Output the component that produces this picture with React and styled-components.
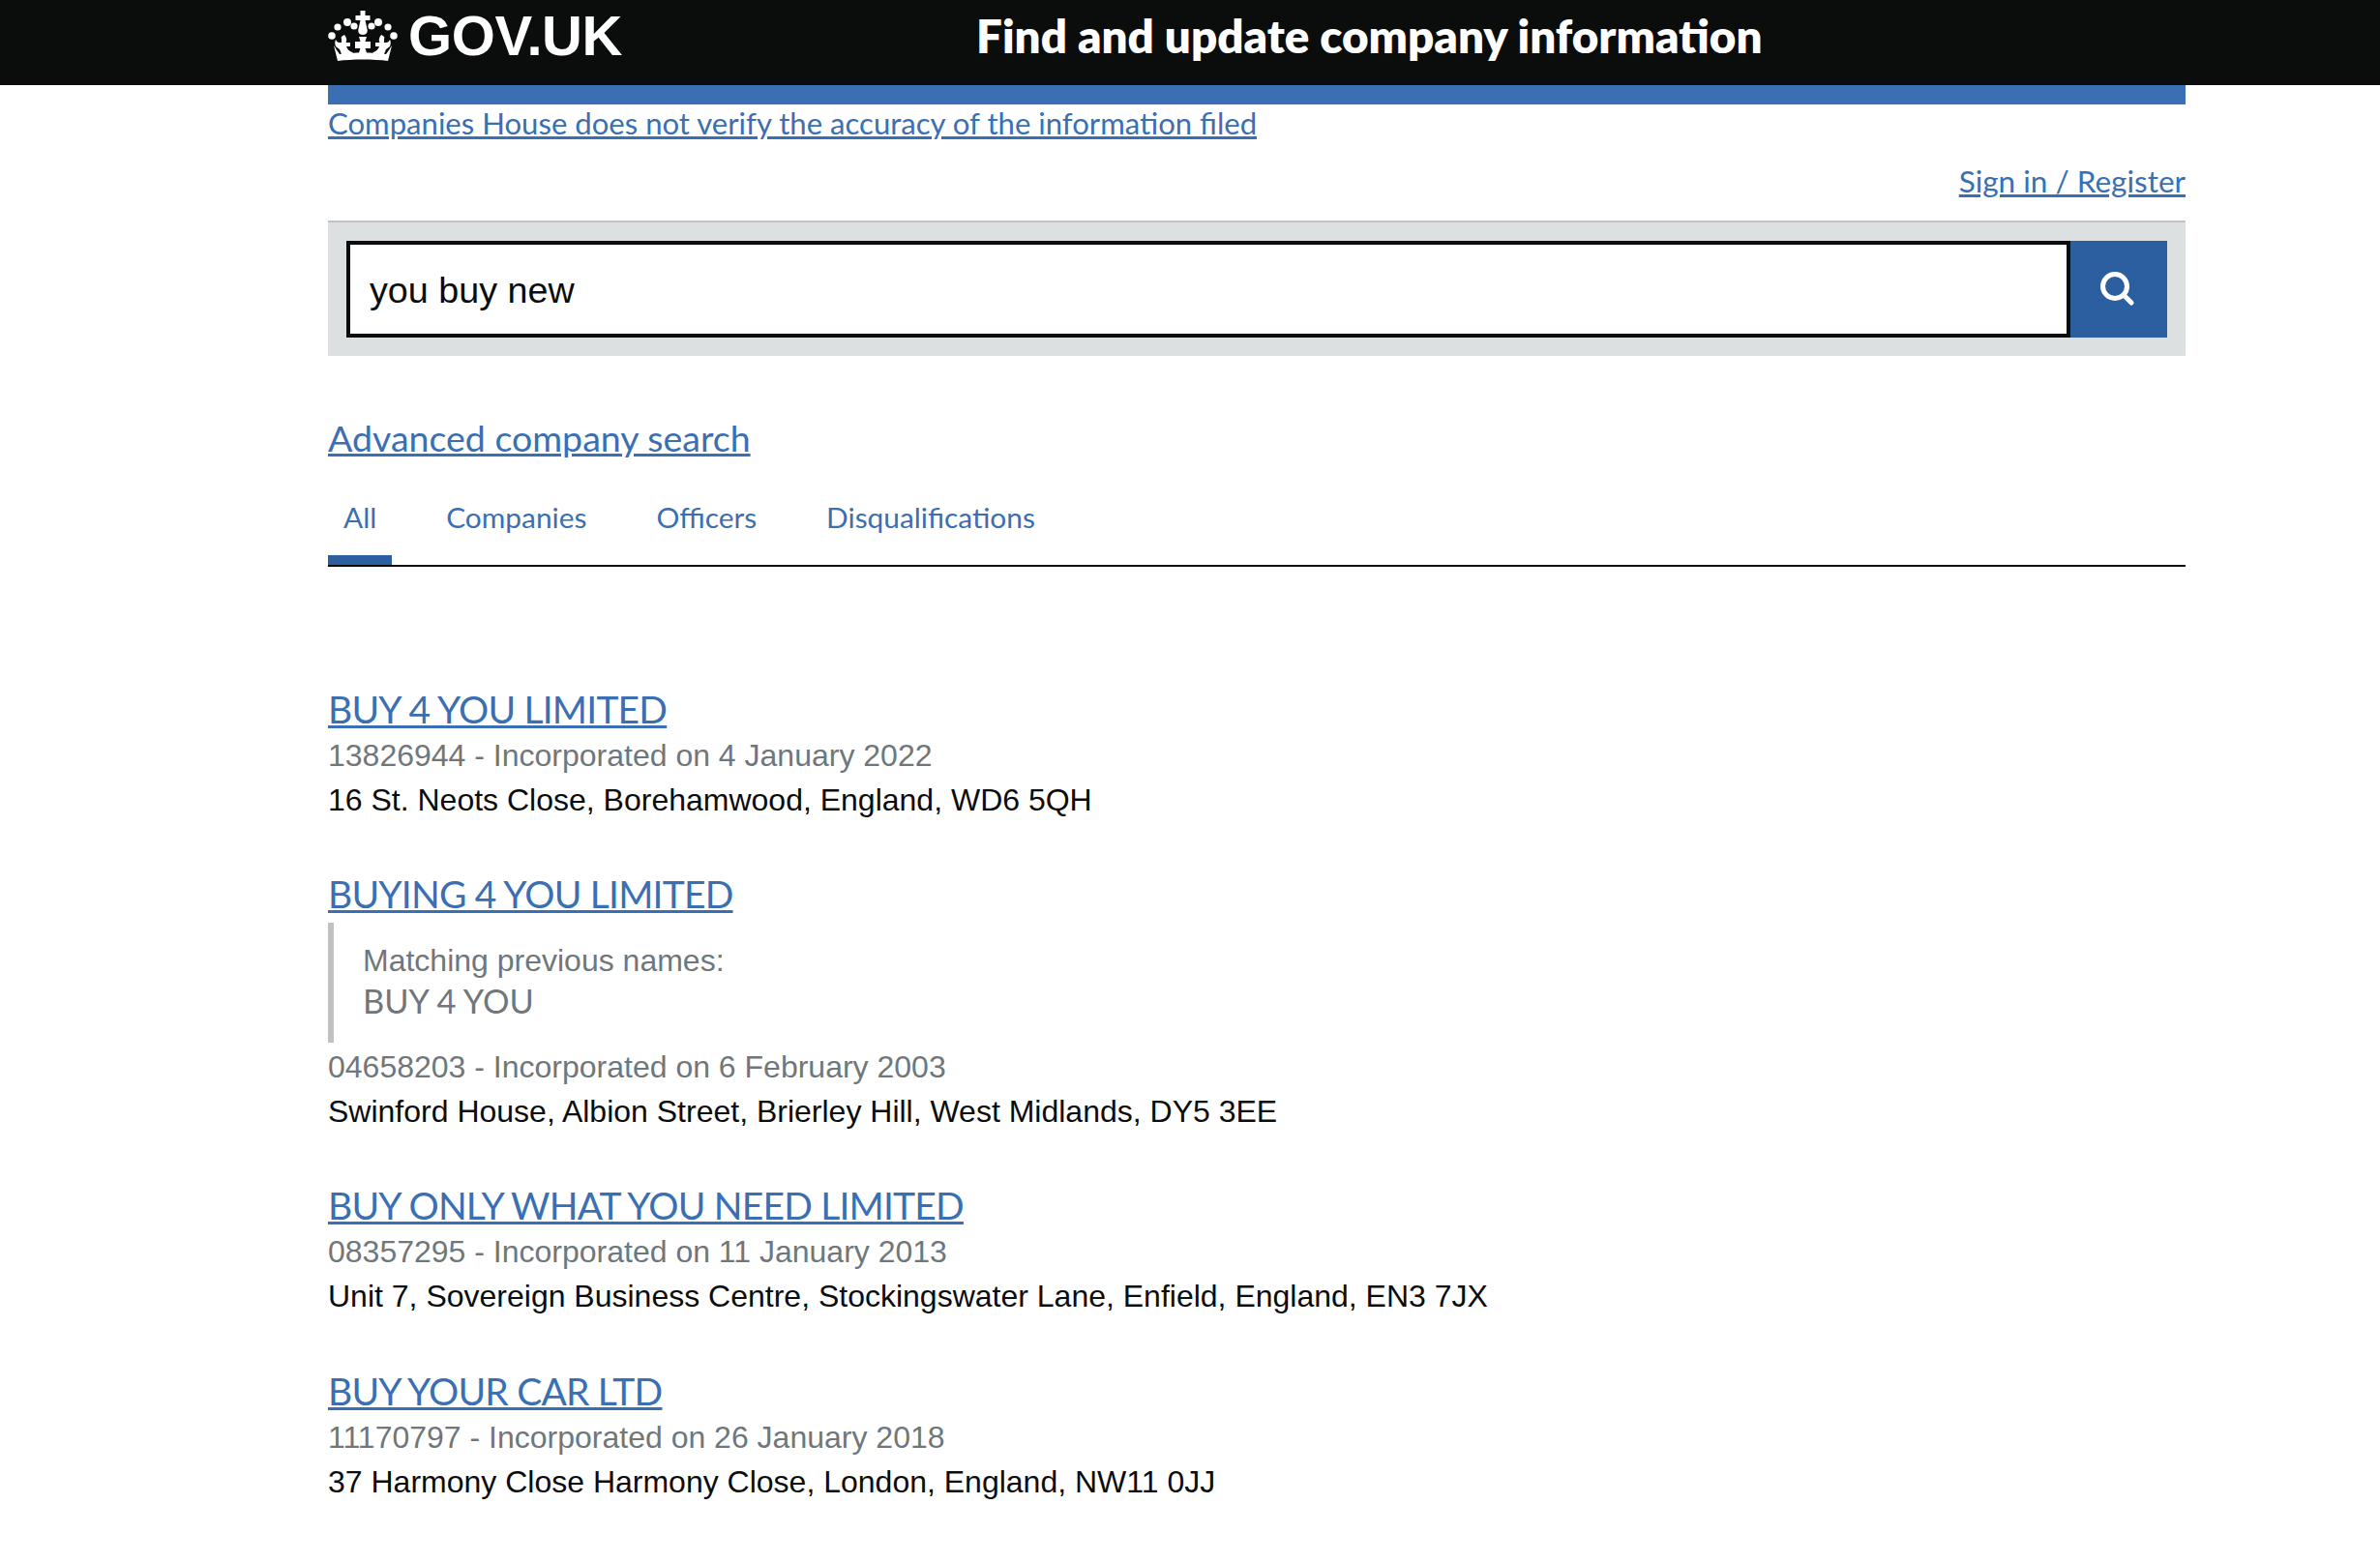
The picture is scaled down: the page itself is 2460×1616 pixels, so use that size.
import React from "react";
import styled, { createGlobalStyle } from "styled-components";

const results = [
  {
    title: "BUY 4 YOU LIMITED",
    meta: "13826944 - Incorporated on 4 January 2022",
    address: "16 St. Neots Close, Borehamwood, England, WD6 5QH",
  },
  {
    title: "BUYING 4 YOU LIMITED",
    previous: "BUY 4 YOU",
    meta: "04658203 - Incorporated on 6 February 2003",
    address: "Swinford House, Albion Street, Brierley Hill, West Midlands, DY5 3EE",
  },
  {
    title: "BUY ONLY WHAT YOU NEED LIMITED",
    meta: "08357295 - Incorporated on 11 January 2013",
    address: "Unit 7, Sovereign Business Centre, Stockingswater Lane, Enfield, England, EN3 7JX",
  },
  {
    title: "BUY YOUR CAR LTD",
    meta: "11170797 - Incorporated on 26 January 2018",
    address: "37 Harmony Close Harmony Close, London, England, NW11 0JJ",
  },
  {
    title: "BUY BOX SOLUTIONS LTD",
  },
];

const tabs = ["All", "Companies", "Officers", "Disqualifications"];

const Crown = () => (
  <svg width="72" height="54" viewBox="0 0 72 54" fill="#fff">
    <path d="M33.5 1h5v5h5v5h-5l2 9c1 3-1 6-4.500 6s-5.500-3-4.500-6l2-9h-5V6h5z" />
    <circle cx="20" cy="13" r="4" />
    <circle cx="52" cy="13" r="4" />
    <circle cx="10" cy="18" r="3.600" />
    <circle cx="62" cy="18" r="3.600" />
    <circle cx="27" cy="17" r="3.600" />
    <circle cx="45" cy="17" r="3.600" />
    <circle cx="4" cy="27" r="3.800" />
    <circle cx="68" cy="27" r="3.800" />
    <path d="M32 28h8l-1.500 5H44v7h-5.500l2 6h-9l2-6H28v-7h5.500z" />
    <path d="M17 26c2 3 3 5 1.500 8H23v4h-4c1 3 3 5 6 6l2 2H14l-2-5-4-3c-1-3-1-5 0-7 1 2 2 3 4 3h2v-4c-1-1 0-3 3-4z" />
    <path d="M55 26c-2 3-3 5-1.500 8H49v4h4c-1 3-3 5-6 6l-2 2h13l2-5 4-3c1-3 1-5 0-7-1 2-2 3-4 3h-2v-4c1-1 0-3-3-4z" />
    <path d="M6 37c2 3 3 5 6 9 15-2 33-2 48 0 3-4 4-6 6-9l-4 16c-14-2-38-2-52 0z" />
  </svg>
);

const SearchIcon = () => (
  <svg width="36" height="36" viewBox="0 0 36 36" fill="none" stroke="#fff">
    <circle cx="15" cy="15" r="12.500" strokeWidth="5" />
    <path d="M25 25l7 7" strokeWidth="5" strokeLinecap="round" />
  </svg>
);

export default function App() {
  return (
    <>
      <GlobalStyle />
      <Header>
        <Logo>
          <Crown />
          <LogoText>GOV.UK</LogoText>
        </Logo>
        <ServiceName>Find and update company information</ServiceName>
      </Header>
      <Page>
        <PhaseBar />
        <Notice href="#">Companies House does not verify the accuracy of the information filed</Notice>
        <SignInRow>
          <SignIn href="#">Sign in / Register</SignIn>
        </SignInRow>
        <SearchPanel>
          <SearchInput defaultValue="you buy new" />
          <SearchButton aria-label="Search">
            <SearchIcon />
          </SearchButton>
        </SearchPanel>
        <AdvancedLink href="#">Advanced company search</AdvancedLink>
        <Tabs>
          {tabs.map((tab, i) => (
            <Tab key={tab} $active={i === 0}>
              {tab}
            </Tab>
          ))}
        </Tabs>
        <Results>
          {results.map((r) => (
            <Result key={r.title}>
              <ResultTitle href="#">{r.title}</ResultTitle>
              {r.previous && (
                <Previous>
                  <PreviousLabel>Matching previous names:</PreviousLabel>
                  <PreviousName>{r.previous}</PreviousName>
                </Previous>
              )}
              {r.meta && <Meta>{r.meta}</Meta>}
              {r.address && <Address>{r.address}</Address>}
            </Result>
          ))}
        </Results>
      </Page>
    </>
  );
}

const GlobalStyle = createGlobalStyle`
  html, body {
    margin: 0;
    height: 1616px;
    overflow: hidden;
    background: #fff;
  }
`;

const Header = styled.header`
  display: flex;
  align-items: center;
  height: 88px;
  padding-left: 339px;
  background: #0b0c0c;
  color: #fff;
`;

const Logo = styled.div`
  display: flex;
  align-items: center;
  gap: 11px;
  width: 670px;
  margin-top: -14px;
`;

const LogoText = styled.span`
  font-family: "Liberation Sans", Arial, sans-serif;
  font-weight: 700;
  font-size: 58px;
  line-height: 58px;
  letter-spacing: -0.4px;
`;

const ServiceName = styled.div`
  font-family: Lato, sans-serif;
  font-weight: 800;
  font-size: 47.500px;
  line-height: 52px;
  margin-top: -14px;
`;

const Page = styled.main`
  display: flex;
  flex-direction: column;
  width: 1920px;
  margin-left: 339px;
  font-family: Lato, sans-serif;
`;

const PhaseBar = styled.div`
  height: 20px;
  background: #3a6fb3;
`;

const Notice = styled.a`
  align-self: flex-start;
  font-size: 31.100px;
  line-height: 38px;
  color: #3a6fb3;
  text-decoration: underline;
`;

const SignInRow = styled.div`
  display: flex;
  justify-content: flex-end;
  margin-top: 22px;
`;

const SignIn = styled(Notice)`
  font-size: 31.500px;
`;

const SearchPanel = styled.form`
  display: flex;
  margin-top: 22px;
  padding: 19px;
  background: #dde0e1;
  border-top: 2px solid #bfc1c3;
`;

const SearchInput = styled.input`
  flex: 1;
  box-sizing: border-box;
  height: 100px;
  padding: 2px 20px 0;
  border: 4px solid #0b0c0c;
  outline: none;
  font-family: "Liberation Sans", Arial, sans-serif;
  font-size: 37.700px;
  color: #0b0c0c;
`;

const SearchButton = styled.button`
  display: flex;
  align-items: center;
  justify-content: center;
  width: 100px;
  height: 100px;
  padding: 0 2px 0 0;
  border: none;
  background: #2b5f9f;
`;

const AdvancedLink = styled.a`
  align-self: flex-start;
  margin-top: 62px;
  font-size: 37.500px;
  line-height: 46px;
  color: #3a6fb3;
  text-decoration: underline;
`;

const Tabs = styled.nav`
  display: flex;
  gap: 40px;
  margin-top: 40px;
  border-bottom: 2px solid #0b0c0c;
`;

const Tab = styled.span`
  margin-top: -1px;
  padding: 0 16px 19px;
  font-size: 29.850px;
  line-height: 40px;
  color: #3a6fb3;
  border-bottom: 10px solid ${(p) => (p.$active ? "#2b5f9f" : "transparent")};
`;

const Results = styled.section`
  display: flex;
  flex-direction: column;
  gap: 50.2px;
  margin-top: 123px;
`;

const Result = styled.article`
  display: flex;
  flex-direction: column;
  align-items: flex-start;
`;

const ResultTitle = styled.a`
  font-size: 39px;
  line-height: 49px;
  letter-spacing: -0.8px;
  color: #3a6fb3;
  text-decoration: underline;
`;

const Previous = styled.div`
  align-self: stretch;
  box-sizing: border-box;
  height: 124px;
  margin: 5px 0 2px;
  padding: 20px 0 0 30px;
  border-left: 6px solid #bfc1c3;
  color: #6f777b;
`;

const PreviousLabel = styled.div`
  font-family: "Liberation Sans", Arial, sans-serif;
  font-size: 32px;
  line-height: 38px;
`;

const PreviousName = styled.div`
  font-size: 34.400px;
  line-height: 46px;
`;

const Meta = styled.div`
  font-family: "Liberation Sans", Arial, sans-serif;
  font-size: 32px;
  line-height: 46px;
  color: #6f777b;
`;

const Address = styled.div`
  font-family: "Liberation Sans", Arial, sans-serif;
  font-size: 32px;
  line-height: 46px;
  color: #0b0c0c;
`;
